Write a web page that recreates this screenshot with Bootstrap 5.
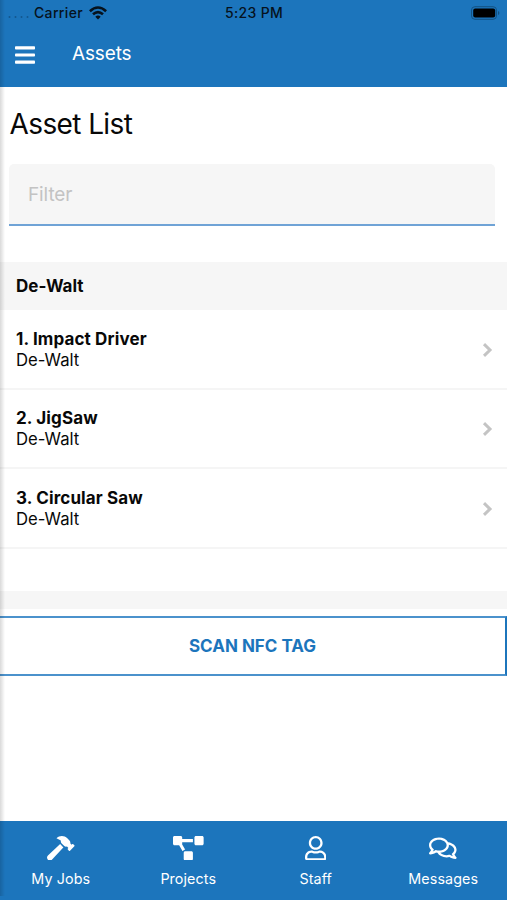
<!DOCTYPE html>
<html lang="en">
<head>
<meta charset="utf-8">
<meta name="viewport" content="width=device-width, initial-scale=1">
<title>Assets</title>
<link href="https://cdn.jsdelivr.net/npm/bootstrap@5.3.0/dist/css/bootstrap.min.css" rel="stylesheet">
<style>
:root{--brand:#1c75bc}
body{font-family:Inter,"Liberation Sans",sans-serif;color:#080808;background:#fff;overflow:hidden}
.app{height:900px;width:507px}
.app::before{content:"";position:absolute;left:0;top:0;width:5px;height:896px;background:linear-gradient(90deg,rgba(0,0,0,.15),rgba(0,0,0,0));z-index:5}
.brand-bg{background:var(--brand)}
.app-header{height:86.5px}
.status{height:26px;padding:0 7px 0 8px;font-size:14px;font-weight:500;letter-spacing:.35px;color:#06121d}
.status span{margin-top:-1px}
.status-side{width:110px}
.dots{width:21px;height:2px;margin:8px 5px 0 0}
.wifi{margin-left:6px}
.title-row{height:58px;padding-left:15px}
.title-row h1{font-size:19px;font-weight:400;line-height:24px;margin:0 0 2px 37px;letter-spacing:-.15px}
.page-title{font-size:28px;font-weight:400;line-height:36px;margin:19px 0 0 9.5px;letter-spacing:-.6px}
.filter{width:486px;height:62px;margin:22.5px 0 0 9px;border:0;border-bottom:2px solid #6fa3d6;border-radius:5px 5px 0 0;background:#f6f6f6;padding:1px 19px 0;font-size:19px;letter-spacing:-.1px}
.filter:focus{background:#f6f6f6;box-shadow:none}
.filter::placeholder{color:#c3c3c3;opacity:1}
.group-head{height:48px;margin-top:36px;padding:2px 0 0 16px;background:#f6f6f6;font-size:17px;font-weight:700}
.asset{height:79.5px;padding:2px 14px 0 16px;border-bottom:2px solid #f5f5f5;font-size:16.7px;line-height:21px}
.asset b{font-weight:700;font-size:17px;letter-spacing:.13px}
.strip{height:18px;margin-top:42.3px;background:#f6f6f6}
.scan{width:507px;height:60px;margin:7px 0 0;padding:7px 0 5px;border:solid #4b92cc;border-width:2px 2px 2px 0;border-right-color:var(--brand);border-radius:0;color:var(--brand);font-size:17px;font-weight:700}
.tabs{height:79px;padding-top:14.5px;margin-left:-3px;width:510px}
.tabs a{color:#fff;font-size:14.3px;line-height:20px;text-decoration:none;letter-spacing:.1px}
.tabs svg{height:24.5px;margin-bottom:8.5px;fill:#fff}
</style>
<script src="https://cdn.jsdelivr.net/npm/bootstrap@5.3.0/dist/js/bootstrap.bundle.min.js"></script>
</head>
<body>
<div class="app d-flex flex-column position-relative">
  <header class="app-header brand-bg flex-shrink-0">
    <div class="status d-flex align-items-center justify-content-between">
      <div class="status-side d-flex align-items-center">
        <svg class="dots flex-shrink-0" viewBox="0 0 21 2" fill="#13578e"><circle cx="1.5" cy="1" r="1"/><circle cx="7.5" cy="1" r="1"/><circle cx="13.5" cy="1" r="1"/><circle cx="19.5" cy="1" r="1"/></svg>
        <span>Carrier</span>
        <svg class="wifi flex-shrink-0" width="18" height="14" viewBox="0 0 18 14" fill="none" stroke="#06121d" stroke-width="2.6"><path d="M.9 5.2Q9-2.2 17.1 5.2"/><path d="M4 8.3Q9 3.9 14 8.3"/><path d="M6.3 10.7Q9 8.5 11.7 10.7L9 13.5Z" fill="#06121d" stroke="none"/></svg>
      </div>
      <span>5:23 PM</span>
      <div class="status-side d-flex justify-content-end">
        <svg width="30" height="14" viewBox="0 0 30 14"><rect x="1.5" y=".7" width="25" height="12.6" rx="3.4" fill="none" stroke="#135283"/><rect x="3.2" y="2.4" width="22" height="9.2" rx="2" fill="#000"/><path d="M28 5v4q1.4-.6 1.4-2t-1.4-2Z" fill="#135283"/></svg>
      </div>
    </div>
    <div class="title-row d-flex align-items-center text-white">
      <svg width="20" height="18" viewBox="0 0 20 18" fill="#fff"><rect y=".3" width="20" height="3.2" rx=".8"/><rect y="7.4" width="20" height="3.2" rx=".8"/><rect y="14.5" width="20" height="3.2" rx=".8"/></svg>
      <h1>Assets</h1>
    </div>
  </header>
  <main class="flex-grow-1">
    <h2 class="page-title">Asset List</h2>
    <input class="filter form-control" type="text" placeholder="Filter" aria-label="Filter">
    <div class="group-head d-flex align-items-center">De-Walt</div>
    <div class="asset d-flex align-items-center justify-content-between"><div><b>1. Impact Driver</b><br>De-Walt</div><svg width="11" height="14" viewBox="0 0 11 14" fill="none" stroke="#c4c4c4" stroke-width="3"><path d="M2 1.2 8 7 2 12.8"/></svg></div>
    <div class="asset d-flex align-items-center justify-content-between"><div><b>2. JigSaw</b><br>De-Walt</div><svg width="11" height="14" viewBox="0 0 11 14" fill="none" stroke="#c4c4c4" stroke-width="3"><path d="M2 1.2 8 7 2 12.8"/></svg></div>
    <div class="asset d-flex align-items-center justify-content-between"><div><b>3. Circular Saw</b><br>De-Walt</div><svg width="11" height="14" viewBox="0 0 11 14" fill="none" stroke="#c4c4c4" stroke-width="3"><path d="M2 1.2 8 7 2 12.8"/></svg></div>
    <div class="strip"></div>
    <button class="scan btn d-flex align-items-center justify-content-center">SCAN NFC TAG</button>
  </main>
  <div class="brand-bg flex-shrink-0">
    <nav class="tabs d-flex">
      <a href="#" class="w-25 d-flex flex-column align-items-center"><svg viewBox="0 0 576 512"><path d="M571.31 193.94l-22.63-22.63c-6.25-6.25-16.38-6.25-22.63 0l-11.31 11.31-28.9-28.9c5.63-21.31.36-44.9-16.35-61.61l-45.25-45.25c-62.48-62.48-163.79-62.48-226.28 0l90.51 45.25v18.75c0 16.97 6.74 33.25 18.75 45.25l49.14 49.14c16.71 16.71 40.3 21.98 61.61 16.35l28.9 28.9-11.31 11.31c-6.25 6.25-6.25 16.38 0 22.63l22.63 22.63c6.25 6.25 16.38 6.25 22.63 0l90.51-90.51c6.23-6.24 6.23-16.37-.02-22.62zm-286.72-15.2c-3.7-3.7-6.84-7.79-9.85-11.95L19.64 404.96c-25.57 23.88-26.26 64.19-1.53 88.93s65.05 24.05 88.92-1.53l238.13-255.07c-3.96-2.91-7.9-5.87-11.44-9.41l-49.13-49.14z"/></svg>My Jobs</a>
      <a href="#" class="w-25 d-flex flex-column align-items-center"><svg viewBox="0 0 640 512"><path d="M384 320H256c-17.67 0-32 14.33-32 32v128c0 17.67 14.33 32 32 32h128c17.67 0 32-14.33 32-32V352c0-17.67-14.33-32-32-32zM192 32c0-17.67-14.33-32-32-32H32C14.33 0 0 14.33 0 32v128c0 17.67 14.33 32 32 32h95.72l73.16 128.04C211.98 300.98 232.4 288 256 288h.28L192 175.51V128h224V64H192V32zM608 0H480c-17.67 0-32 14.33-32 32v128c0 17.67 14.33 32 32 32h128c17.67 0 32-14.33 32-32V32c0-17.67-14.33-32-32-32z"/></svg>Projects</a>
      <a href="#" class="w-25 d-flex flex-column align-items-center"><svg viewBox="0 0 448 512"><path d="M313.6 304c-28.7 0-42.5 16-89.6 16-47.1 0-60.8-16-89.6-16C60.2 304 0 364.2 0 438.4V464c0 26.5 21.5 48 48 48h352c26.5 0 48-21.5 48-48v-25.6c0-74.2-60.2-134.4-134.4-134.4zM400 464H48v-25.6c0-47.6 38.8-86.4 86.4-86.4 14.6 0 38.3 16 89.6 16 51.7 0 74.9-16 89.6-16 47.6 0 86.4 38.8 86.4 86.4V464zM224 288c79.5 0 144-64.5 144-144S303.5 0 224 0 80 64.5 80 144s64.5 144 144 144zm0-240c52.9 0 96 43.1 96 96s-43.1 96-96 96-96-43.1-96-96 43.1-96 96-96z"/></svg>Staff</a>
      <a href="#" class="w-25 d-flex flex-column align-items-center"><svg viewBox="0 0 576 512"><path d="M532 386.2c27.5-27.1 44-61.1 44-98.2 0-80-76.5-146.1-176.2-157.9C368.3 72.5 294.3 32 208 32 93.1 32 0 103.6 0 192c0 37 16.5 71 44 98.2-15.3 30.7-37.3 54.5-37.7 54.9-6.3 6.7-8.1 16.5-4.4 25 3.6 8.5 12 14 21.2 14 53.5 0 96.7-20.2 125.2-38.8 9.2 2.1 18.7 3.7 28.4 4.9C208.1 407.6 281.8 448 368 448c20.8 0 40.8-2.4 59.8-6.8C456.3 459.7 499.4 480 553 480c9.2 0 17.5-5.5 21.2-14 3.6-8.5 1.9-18.3-4.4-25-.4-.3-22.5-24.1-37.8-54.8zm-392.8-92.3L122.1 305c-14.1 9.1-28.5 16.3-43.1 21.4 2.7-4.7 5.4-9.7 8-14.8l15.5-31.1L77.7 256C64.2 242.6 48 220.7 48 192c0-60.7 73.3-112 160-112s160 51.3 160 112-73.3 112-160 112c-16.5 0-33-1.9-49-5.6l-19.8-4.5zM498.3 352l-24.7 24.4 15.5 31.1c2.6 5.1 5.3 10.1 8 14.8-14.6-5.1-29-12.3-43.1-21.4l-17.1-11.1-19.9 4.6c-16 3.7-32.5 5.6-49 5.6-54 0-102.2-20.1-131.3-49.7C338 339.5 416 272.9 416 192c0-3.4-.4-6.7-.7-10C479.7 196.5 528 238.8 528 288c0 28.7-16.2 50.6-29.7 64z"/></svg>Messages</a>
    </nav>
  </div>
</div>
</body>
</html>
